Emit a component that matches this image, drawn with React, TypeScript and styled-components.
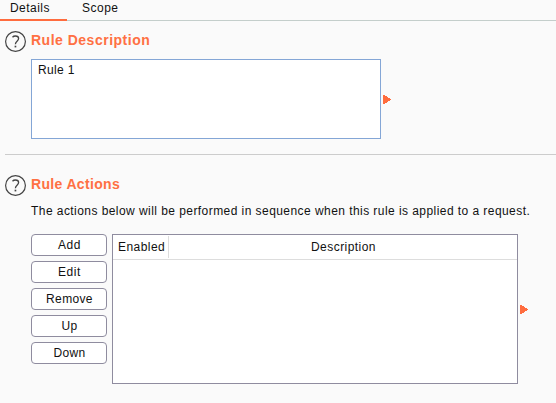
import React from "react";
import styled, { createGlobalStyle } from "styled-components";

const Global = createGlobalStyle`
  * { box-sizing: border-box; }
  body { margin: 0; background: #fafafa; color: #111; overflow: hidden;
    font: 12px/16px "Liberation Sans", Arial, sans-serif; }
`;

const Page = styled.main`
  width: 556px;
  height: 403px;
  background: #fafafa;
`;

const Tabs = styled.nav`
  display: flex;
  height: 21px;
  box-shadow: inset 0 -1px #c4cecb;
`;

const Tab = styled.div<{ $active?: boolean; $spacing: number }>`
  width: ${(p) => (p.$active ? 67 : 70)}px;
  padding-left: ${(p) => (p.$active ? 10 : 15)}px;
  border-bottom: ${(p) => (p.$active ? "2px solid #ff6c3e" : "0")};
  letter-spacing: ${(p) => p.$spacing}px;
  white-space: nowrap;
`;

const Section = styled.section<{ $height: number; $top: number }>`
  height: ${(p) => p.$height}px;
  padding: ${(p) => p.$top}px 0 0 5px;
`;

const SectionHeader = styled.header`
  display: flex;
  height: 22px;
  gap: 5px;
`;

const Title = styled.h2<{ $spacing: number }>`
  margin: 1px 0 0;
  color: #ff7043;
  font: bold 14px/18px "Liberation Sans", Arial, sans-serif;
  letter-spacing: ${(p) => p.$spacing}px;
  white-space: nowrap;
`;

const Content = styled.div`
  display: flex;
  margin-left: 26px;
`;

const TextBox = styled.div`
  width: 350px;
  height: 80px;
  margin-top: 7px;
  padding: 2px 6px;
  border: 1px solid #84a6d6;
  background: #fff;
  letter-spacing: 0.35px;
`;

const Divider = styled.div`
  height: 1px;
  margin-left: 5px;
  background: #cccccc;
`;

const Intro = styled.p`
  margin: 7px 0 15px 26px;
  letter-spacing: 0.44px;
  white-space: nowrap;
`;

const ButtonColumn = styled.div`
  display: flex;
  flex-direction: column;
  gap: 5px;
  width: 76px;
  margin-right: 5px;
`;

const Button = styled.button<{ $spacing: number }>`
  height: 22px;
  padding: 0 0 1px 1px;
  border: 1px solid #8f8c9f;
  border-radius: 4px;
  background: #fff;
  color: #111;
  font: inherit;
  letter-spacing: ${(p) => p.$spacing}px;
`;

const Table = styled.div`
  width: 406px;
  height: 150px;
  border: 1px solid #8f8c9f;
  background: #fff;
`;

const TableHeader = styled.div`
  display: flex;
  height: 25px;
  padding-top: 1px;
  border-bottom: 1px solid #dddddd;
  line-height: 22px;
  letter-spacing: 0.45px;
`;

const Column = styled.div<{ $fixed?: boolean }>`
  width: ${(p) => (p.$fixed ? "56px" : "auto")};
  flex: ${(p) => (p.$fixed ? "none" : "1")};
  height: 22px;
  padding-left: ${(p) => (p.$fixed ? 5 : 1)}px;
  border-right: ${(p) => (p.$fixed ? "1px solid #dddddd" : "0")};
  text-align: ${(p) => (p.$fixed ? "left" : "center")};
`;

const Handle = styled.svg<{ $top: number }>`
  display: block;
  margin: ${(p) => p.$top}px 0 0 2px;
`;

const HelpSvg = styled.svg`
  flex: none;
  display: block;
`;

const Help = () => (
  <HelpSvg width="21" height="22" viewBox="0 0 21 22" fill="none">
    <circle cx="10.5" cy="11.5" r="9.9" stroke="#444" strokeWidth="1.2" />
    <path d="M7.5 7.2C8.3 6.3 9.2 6 10.4 6c2 0 3.2.9 3.2 2.6 0 2.6-3.2 2.8-3.2 5.6" stroke="#444" strokeWidth="1.3" />
    <path d="M9.6 15.7h1.7v1.7H9.6z" fill="#444" />
  </HelpSvg>
);

const Arrow = ({ top }: { top: number }) => (
  <Handle $top={top} width="8" height="9" viewBox="0 0 8 9" shapeRendering="crispEdges">
    <path d="M0 0h2v1h2v1h1v1h2v1h1v1H7v1H5v1H4v1H2v1H0z" fill="#ff6c3e" />
  </Handle>
);

const actions = [
  { label: "Add", spacing: 0.6 },
  { label: "Edit", spacing: 0.6 },
  { label: "Remove", spacing: 0.35 },
  { label: "Up", spacing: 0.3 },
  { label: "Down", spacing: 0.35 },
];

export default function App() {
  return (
    <Page>
      <Global />
      <Tabs>
        <Tab $active $spacing={0.45}>Details</Tab>
        <Tab $spacing={0.5}>Scope</Tab>
      </Tabs>
      <Section $height={133} $top={9}>
        <SectionHeader><Help /><Title $spacing={0.5}>Rule Description</Title></SectionHeader>
        <Content>
          <TextBox>Rule 1</TextBox>
          <Arrow top={43} />
        </Content>
      </Section>
      <Divider />
      <Section $height={248} $top={19}>
        <SectionHeader><Help /><Title $spacing={0.34}>Rule Actions</Title></SectionHeader>
        <Intro>The actions below will be performed in sequence when this rule is applied to a request.</Intro>
        <Content>
          <ButtonColumn>
            {actions.map((a) => <Button key={a.label} $spacing={a.spacing}>{a.label}</Button>)}
          </ButtonColumn>
          <Table>
            <TableHeader>
              <Column $fixed>Enabled</Column>
              <Column>Description</Column>
            </TableHeader>
          </Table>
          <Arrow top={71} />
        </Content>
      </Section>
    </Page>
  );
}
